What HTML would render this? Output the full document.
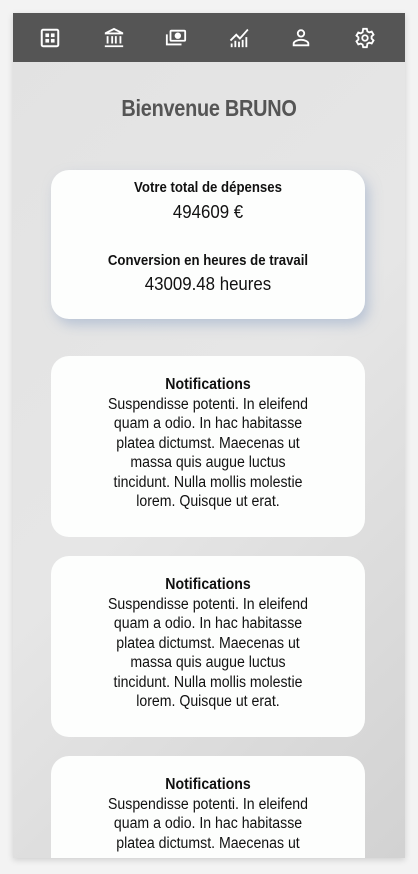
<!DOCTYPE html>
<html><head><meta charset="utf-8"><style>
*{margin:0;padding:0;box-sizing:border-box}
html,body{overflow:hidden}
body{width:418px;height:874px;background:#f3f3f3;font-family:"Liberation Sans",sans-serif;position:relative}
.frame{position:absolute;left:13px;top:13px;width:392px;height:845px;background:linear-gradient(135deg,#e2e2e2,#e6e6e6 50%,#d2d2d2);overflow:hidden;box-shadow:0 2px 6px rgba(0,0,0,.15)}
.hdr{height:49px;background:#555;position:relative}
.hdr svg{position:absolute;top:14px;width:22px;height:22px}
.sx{transform:scaleX(.91);transform-origin:center}
h1{text-align:center;color:#555;font-size:23px;font-weight:bold;margin-top:33px;height:30px;letter-spacing:-0.3px;transform:scaleX(.865)}
.card{position:absolute;left:38px;width:314px;background:#fdfefd;border-radius:18px;text-align:center;color:#111}
.c1{top:157px;height:149px;box-shadow:4px 6px 12px rgba(150,170,200,.55)}
.b{font-weight:bold;font-size:14.5px}
.v{font-size:18.5px}
.n{padding-top:19px}
.n .b{font-size:15.5px;line-height:20px}
.n p{font-size:15.5px;line-height:19.4px;width:314px;margin:0 auto}
</style></head><body>
<div class="frame">
<div class="hdr">
<svg style="left:26px" viewBox="0 0 24 24" fill="none" stroke="#fff" stroke-width="2.2"><rect x="3" y="3" width="18" height="18" rx="1.5"/><rect x="7" y="7" width="4" height="4" fill="#fff" stroke="none"/><rect x="13" y="7" width="4" height="4" fill="#fff" stroke="none"/><rect x="7" y="13" width="4" height="4" fill="#fff" stroke="none"/><rect x="13" y="13" width="4" height="4" fill="#fff" stroke="none"/></svg>
<svg style="left:90px" viewBox="0 0 24 24" fill="#fff"><path d="M12 1 2 6v2h20V6z M4 10h2v8H4z M9 10h2v8H9z M13 10h2v8h-2z M18 10h2v8h-2z M2 20h20v2H2z"/><path d="M12 3.3 6.5 6h11z" fill="#555"/></svg>
<svg style="left:152px" viewBox="0 0 24 24" fill="none" stroke="#fff" stroke-width="2"><rect x="6" y="4" width="16" height="11" rx="1"/><circle cx="14" cy="9.5" r="2.5" fill="#fff"/><path d="M2 8v11h16"/></svg>
<svg style="left:215px" viewBox="0 0 24 24" fill="#fff"><path d="M2 14 9 7l4 4 8-9 1.4 1.4L13 14 9 10l-5.6 5.6z"/><rect x="3" y="18" width="2" height="4"/><rect x="7" y="15" width="2" height="7"/><rect x="11" y="16" width="2" height="6"/><rect x="15" y="14" width="2" height="8"/><rect x="19" y="11" width="2" height="11"/></svg>
<svg style="left:277px" viewBox="0 0 24 24" fill="none" stroke="#fff" stroke-width="2"><circle cx="12" cy="7" r="3.5"/><path d="M4 20v-2c0-2 4-4 8-4s8 2 8 4v2z"/></svg>
<svg style="left:341px" viewBox="0 0 24 24" fill="none" stroke="#fff" stroke-width="2"><circle cx="12" cy="12" r="3"/><path d="M10 2h4l.6 2.8 2 1.1 2.7-.9 2 3.4-2.1 1.9v2.4l2.1 1.9-2 3.4-2.7-.9-2 1.1L14 22h-4l-.6-2.8-2-1.1-2.7.9-2-3.4 2.1-1.9v-2.4L2.7 9.4l2-3.4 2.7.9 2-1.1z"/></svg>
</div>
<h1>Bienvenue BRUNO</h1>
<div class="card c1"><div class="sx" style="padding-top:10px"><div class="b">Votre total de dépenses</div><div class="v" style="margin-top:5px">494609 €</div><div class="b" style="margin-top:30px">Conversion en heures de travail</div><div class="v" style="margin-top:4px">43009.48 heures</div></div></div>
<div class="card n" style="top:343px;height:181px"><div class="sx"><div class="b">Notifications</div><p>Suspendisse potenti. In eleifend<br>quam a odio. In hac habitasse<br>platea dictumst. Maecenas ut<br>massa quis augue luctus<br>tincidunt. Nulla mollis molestie<br>lorem. Quisque ut erat.</p></div></div>
<div class="card n" style="top:543px;height:181px"><div class="sx"><div class="b">Notifications</div><p>Suspendisse potenti. In eleifend<br>quam a odio. In hac habitasse<br>platea dictumst. Maecenas ut<br>massa quis augue luctus<br>tincidunt. Nulla mollis molestie<br>lorem. Quisque ut erat.</p></div></div>
<div class="card n" style="top:743px;height:102px;border-radius:18px 18px 0 0"><div class="sx"><div class="b">Notifications</div><p>Suspendisse potenti. In eleifend<br>quam a odio. In hac habitasse<br>platea dictumst. Maecenas ut</p></div></div>
</div>
</body></html>
